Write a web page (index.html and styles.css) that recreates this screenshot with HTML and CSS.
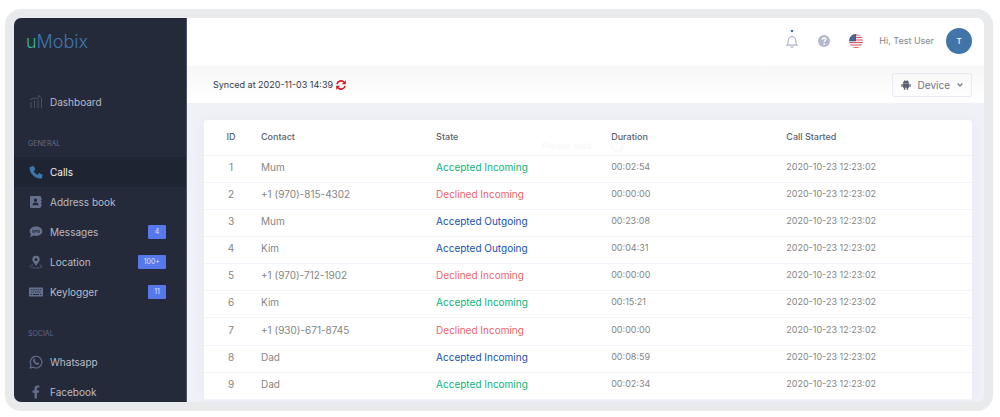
FILE: index.html
```html
<!DOCTYPE html>
<html lang="en">
<head>
<meta charset="utf-8">
<title>uMobix – Calls</title>
<link rel="stylesheet" href="styles.css">
</head>
<body>
<div class="frame">
  <div class="app">
    <nav class="sidebar" aria-label="Main">
      <a class="logo" href="#"><span class="logo-u">u</span>Mobix</a>
      <a class="item" href="#">
        <svg class="icon dim" viewBox="0 0 14 14"><path d="M2 13V7M5.500 13V5.500M9 13V4.500M12.500 13V3M1 5l4-2 3 .5L11 1M9 1h2v1.500" fill="none" stroke="currentColor"/></svg>
        <span>Dashboard</span></a>
      <h2 class="group">GENERAL</h2>
      <a class="item active" href="#" aria-current="page">
        <svg class="icon blue" viewBox="0 0 14 14"><path d="M1 2 4 1c.5-.1.900 0 1 .4l1.200 2.700c.2.400.1.800-.2 1L4.600 6.300a9 9 0 0 0 3.800 3.600l1.100-1.400c.3-.4.7-.4 1.100-.2l2.600 1.200c.4.2.5.5.4.900l-.7 2.600c-.1.400-.4.600-.8.600C6 13.600.6 8.500.5 2.700c0-.4.2-.600.5-.7z" fill="currentColor"/></svg>
        <span>Calls</span></a>
      <a class="item" href="#">
        <svg class="icon" viewBox="0 0 14 14"><path d="M2.200 1h8.600c.7 0 1.200.5 1.200 1.200v1h.8v1.600H12v1.400h.8v1.600H12v1.400h.8v1.600H12v1c0 .7-.5 1.200-1.200 1.200H2.200c-.7 0-1.200-.5-1.200-1.200V2.200C1 1.500 1.500 1 2.200 1zM6.500 3.500a1.700 1.700 0 1 0 0 3.400 1.700 1.700 0 0 0 0-3.400zM3.500 10.200h6c0-1.800-1-2.700-2-2.700l-1 .3-1-.3c-1 0-2 .9-2 2.700z" fill="currentColor" fill-rule="evenodd"/></svg>
        <span>Address book</span></a>
      <a class="item" href="#">
        <svg class="icon" viewBox="0 0 14 14"><path d="M7 1.500c3.600 0 6.300 2.100 6.300 4.800S10.600 11 7 11c-.9 0-1.800-.1-2.600-.4-.9.700-2.200 1.300-3.800 1.300.7-.7 1.200-1.500 1.400-2.400C1.200 8.600.7 7.500.7 6.300c0-2.700 2.700-4.800 6.300-4.800z" fill="currentColor"/><path d="M5 5.200H3.600v1H5v1.200H3.500M6 7.700V5l1 1.300L8 5v2.700M10.500 5.200H9.200v1h1.300v1.200H9" fill="none" stroke="#252a3b" stroke-width=".7"/></svg>
        <span>Messages</span><span class="badge">4</span></a>
      <a class="item" href="#">
        <svg class="icon" viewBox="0 0 14 14"><path d="M7 .7a3.700 3.700 0 0 0-3.700 3.700C3.300 6.600 5.500 8 7 11c1.500-3 3.700-4.400 3.700-6.600A3.700 3.700 0 0 0 7 .7zm0 2.200a1.500 1.500 0 1 1 0 3 1.500 1.500 0 0 1 0-3z" fill="currentColor" fill-rule="evenodd"/><path d="M4 9.800c-2 .3-3 .8-3 1.500C1 12.400 3.500 13 7 13s6-.6 6-1.700c0-.7-1-1.200-3-1.500" fill="none" stroke="currentColor" stroke-width=".8" stroke-dasharray="1.500 .5"/></svg>
        <span>Location</span><span class="badge">100+</span></a>
      <a class="item" href="#">
        <svg class="icon" viewBox="0 0 14 14"><rect x="0" y="2.500" width="14" height="9" rx=".7" fill="currentColor"/><path d="M1.500 4.700h11M2.200 7h10" stroke="#252a3b" stroke-width="1.100" stroke-dasharray="1.100 .8"/><path d="M1.500 9.500h1.300M4 9.500h6M11.200 9.500h1.300" stroke="#252a3b"/></svg>
        <span>Keylogger</span><span class="badge">11</span></a>
      <h2 class="group">SOCIAL</h2>
      <a class="item" href="#">
        <svg class="icon" viewBox="0 0 14 14"><path d="M1.200 12.900 2 9.800a5.800 5.800 0 1 1 2.200 2.300z" fill="none" stroke="currentColor" stroke-width="1.100"/><path d="M4.600 4c.5-.5 1-.4 1.200.1l.5 1.100-.6.900c.5 1 1.200 1.700 2.200 2.100l.8-.8 1.400.7c.2.800-.5 1.700-1.500 1.700C6.500 9.700 4.200 7.200 4.100 5.400c0-.6.200-1.100.5-1.400z" fill="currentColor"/></svg>
        <span>Whatsapp</span></a>
      <a class="item" href="#">
        <svg class="icon" viewBox="0 0 14 14"><path d="M5.500 13.500V7.700h-2V5.400h2V3.700C5.500 1.600 6.700.5 8.600.5c.9 0 1.700.1 1.700.1v2H9.200c-1 0-1.300.6-1.300 1.300v1.500h2.300l-.4 2.300H7.900v5.800z" fill="currentColor"/></svg>
        <span>Facebook</span></a>
    </nav>
    <main class="main">
      <header class="topbar">
        <button class="icon-button" aria-label="Notifications">
          <svg width="14" height="22" viewBox="0 0 14 22"><circle cx="7" cy="3" r="1.300" fill="#3c71a8"/><path d="M7 8.200v1M1.800 17.200h10.400c-1-.8-1.400-1.600-1.400-3v-1.700a3.800 3.800 0 0 0-7.600 0v1.700c0 1.400-.4 2.200-1.400 3zM5.500 18.500c.4.900 2.600.9 3 0" fill="none" stroke="#b3b6cc" stroke-width="1.200"/></svg>
        </button>
        <button class="icon-button" aria-label="Help">
          <svg width="12" height="12" viewBox="0 0 12 12"><circle cx="6" cy="6" r="6" fill="#b5b8cc"/><path d="M4.200 4.700C4.300 3.500 5 3 6 3s1.900.5 1.900 1.500C7.900 5.700 6.200 5.700 6.200 7" fill="none" stroke="#fff" stroke-width="1.400"/><circle cx="6.200" cy="8.900" r=".9" fill="#fff"/></svg>
        </button>
        <button class="icon-button" aria-label="Language: English">
          <svg width="14" height="14" viewBox="0 0 14 14"><defs><clipPath id="round"><circle cx="7" cy="7" r="7"/></clipPath></defs><g clip-path="url(#round)"><path d="M0 0h14v14H0z" fill="#f3eef0"/><path d="M0 1h14M0 3.500h14M0 6h14M0 8.500h14M0 11h14M0 13.500h14" stroke="#e0565c" stroke-width="1.200"/><path d="M0 0h7v7.200H0z" fill="#3f5c92"/><path d="M2 3h4M1.500 5h4.500" stroke="#91a2c4" stroke-width=".6" stroke-dasharray=".8 .8"/></g></svg>
        </button>
        <span class="hello">Hi, Test User</span>
        <button class="avatar" aria-label="Account">T</button>
      </header>
      <div class="subbar">
        <span>Synced at 2020-11-03 14:39</span>
        <button class="icon-button refresh" aria-label="Refresh">
          <svg width="10" height="10" viewBox="0 0 10 10"><path d="M1 4.200A4 4 0 0 1 8 2.300M9 5.800A4 4 0 0 1 2 7.700" fill="none" stroke="#d8141c" stroke-width="1.600"/><path d="M9.800.2v4H5.800zM.2 9.800v-4h4z" fill="#d8141c"/></svg>
        </button>
        <button class="device">
          <svg width="10" height="10" viewBox="0 0 10 10"><path d="M2 3.200C2.100 1.300 3.300.7 5 .7s2.900.6 3 2.500zM2 3.600h6v4.100H7.100v2H5.700v-2H4.300v2H2.900v-2H2zM.4 3.900h1.200v3H.4zM8.400 3.900h1.200v3H8.400z" fill="#5b6072"/><path d="M3.100 0l.8 1.200M6.900 0l-.8 1.200" stroke="#5b6072" stroke-width=".5"/></svg>
          <span>Device</span>
          <svg width="6" height="6" viewBox="0 0 6 6"><path d="M.7 1.500 3 4l2.300-2.500" fill="none" stroke="#777b88" stroke-width="1.200"/></svg>
        </button>
      </div>
      <section class="content">
        <div class="card">
          <table class="calls">
            <thead><tr><th class="id">ID</th><th class="wide">Contact</th><th class="wide">State</th><th class="wide">Duration</th><th>Call Started</th></tr></thead>
            <tbody>
              <tr><td class="id">1</td><td>Mum</td><td class="green">Accepted Incoming</td><td class="time">00:02:54</td><td class="time">2020-10-23 12:23:02</td></tr>
              <tr><td class="id">2</td><td>+1 (970)-815-4302</td><td class="red">Declined Incoming</td><td class="time">00:00:00</td><td class="time">2020-10-23 12:23:02</td></tr>
              <tr><td class="id">3</td><td>Mum</td><td class="navy">Accepted Outgoing</td><td class="time">00:23:08</td><td class="time">2020-10-23 12:23:02</td></tr>
              <tr><td class="id">4</td><td>Kim</td><td class="navy">Accepted Outgoing</td><td class="time">00:04:31</td><td class="time">2020-10-23 12:23:02</td></tr>
              <tr><td class="id">5</td><td>+1 (970)-712-1902</td><td class="red">Declined Incoming</td><td class="time">00:00:00</td><td class="time">2020-10-23 12:23:02</td></tr>
              <tr><td class="id">6</td><td>Kim</td><td class="green">Accepted Incoming</td><td class="time">00:15:21</td><td class="time">2020-10-23 12:23:02</td></tr>
              <tr><td class="id">7</td><td>+1 (930)-671-8745</td><td class="red">Declined Incoming</td><td class="time">00:00:00</td><td class="time">2020-10-23 12:23:02</td></tr>
              <tr><td class="id">8</td><td>Dad</td><td class="navy">Accepted Incoming</td><td class="time">00:08:59</td><td class="time">2020-10-23 12:23:02</td></tr>
              <tr><td class="id">9</td><td>Dad</td><td class="green">Accepted Incoming</td><td class="time">00:02:34</td><td class="time">2020-10-23 12:23:02</td></tr>
            </tbody>
          </table>
          <div class="wait" aria-hidden="true"><span>Please wait</span><span class="ring"></span></div>
        </div>
      </section>
    </main>
  </div>
</div>
</body>
</html>
```

FILE: styles.css
```css
* { box-sizing: border-box; }

body {
  margin: 0;
  padding: 9px 7px 6px 5px;
  background: #fff;
  font: 10px/14px Inter, "Open Sans", sans-serif;
  color: #858585;
}

button {
  margin: 0;
  padding: 0;
  border: 0;
  background: none;
  font: inherit;
  color: inherit;
}

.frame {
  height: calc(100vh - 15px);
  padding: 9px;
  border-radius: 16px;
  background: #e9eaec;
}

.app {
  display: flex;
  height: 100%;
  overflow: hidden;
  border-radius: 7px;
  background: #f0f1f7;
}

.sidebar {
  flex: 0 0 173px;
  background: #252a3b;
  border-right: 1px solid #50546a;
}

.logo {
  display: block;
  height: 69px;
  padding: 12px 12px 0;
  font: 300 18px/24px Inter, sans-serif;
  color: #4076ad;
  text-decoration: none;
}

.logo-u { color: #3cb491; }

.item {
  display: flex;
  align-items: center;
  height: 30px;
  padding: 0 20px 0 15px;
  color: #b9bbc5;
  text-decoration: none;
}

.active {
  background: #1f2432;
  color: #f0f1f4;
}

.icon {
  width: 14px;
  height: 14px;
  margin-right: 7px;
  color: #65708f;
}

.dim { color: #4b5065; }
.blue { color: #3c76ae; }

.badge {
  min-width: 18px;
  margin-left: auto;
  padding: 0 6px;
  border-radius: 1px;
  background: #5578eb;
  color: #dbe3fc;
  font-size: 7px;
  line-height: 14px;
  text-align: center;
}

.group {
  height: 40px;
  margin: 0;
  padding: 20px 14px 0;
  font-size: 7px;
  font-weight: 400;
  line-height: 14px;
  color: #646b85;
}

.main {
  display: flex;
  flex: 1;
  flex-direction: column;
  min-width: 0;
}

.topbar {
  display: flex;
  flex: 0 0 48px;
  align-items: center;
  justify-content: flex-end;
  padding: 0 12px 2px;
  background: #fff;
}

.icon-button {
  display: flex;
  margin-right: 19px;
}

.topbar .icon-button:first-child { padding-bottom: 4px; }

.hello {
  margin: 0 12px 0 -3px;
  font-size: 9px;
}

.avatar {
  width: 26px;
  height: 26px;
  border-radius: 50%;
  background: #4174a7;
  color: #fff;
  font-size: 8px;
  font-weight: 500;
}

.subbar {
  display: flex;
  flex: 0 0 37px;
  align-items: center;
  padding: 0 12px 0 26px;
  background: linear-gradient(#f7f7f8, #fff);
  color: #34384a;
  font-size: 9px;
}

.refresh { margin: 0 auto 0 3px; }

.device {
  display: flex;
  align-items: center;
  gap: 7px;
  height: 24px;
  padding: 0 8px;
  border: 1px solid #e9eaf1;
  border-radius: 2px;
  color: #747783;
  font-size: 10px;
}

.content { padding: 17px 12px 0 17px; }

.card {
  position: relative;
  border-radius: 3px;
  background: #fff;
  box-shadow: 0 0 12px #e9e9f2;
}

.calls {
  width: 100%;
  height: 280px;
  border-collapse: collapse;
  table-layout: fixed;
}

.calls th,
.calls td {
  height: 27px;
  padding: 0 0 4px;
  border-bottom: 1px solid #f3f3fb;
  font-weight: 400;
  text-align: left;
}

.calls th {
  height: 35px;
  padding: 0;
  color: #5b5f70;
  font-size: 9px;
  font-weight: 500;
}

.calls .id {
  width: 57px;
  padding-right: 3px;
  text-align: center;
}

.calls .wide { width: 22.8%; }

.calls .time { font-size: 9px; }
.calls .green { color: #0bb37a; }
.calls .red { color: #ee6468; }
.calls .navy { color: #1650b0; }

.wait {
  position: absolute;
  top: 19px;
  left: 44%;
  display: flex;
  align-items: center;
  gap: 20px;
  color: #f9f9fa;
  font-size: 9px;
  font-weight: 600;
}

.ring {
  width: 12px;
  height: 12px;
  border: 1px solid #f6f6f8;
  border-top-color: transparent;
  border-radius: 50%;
}
```
